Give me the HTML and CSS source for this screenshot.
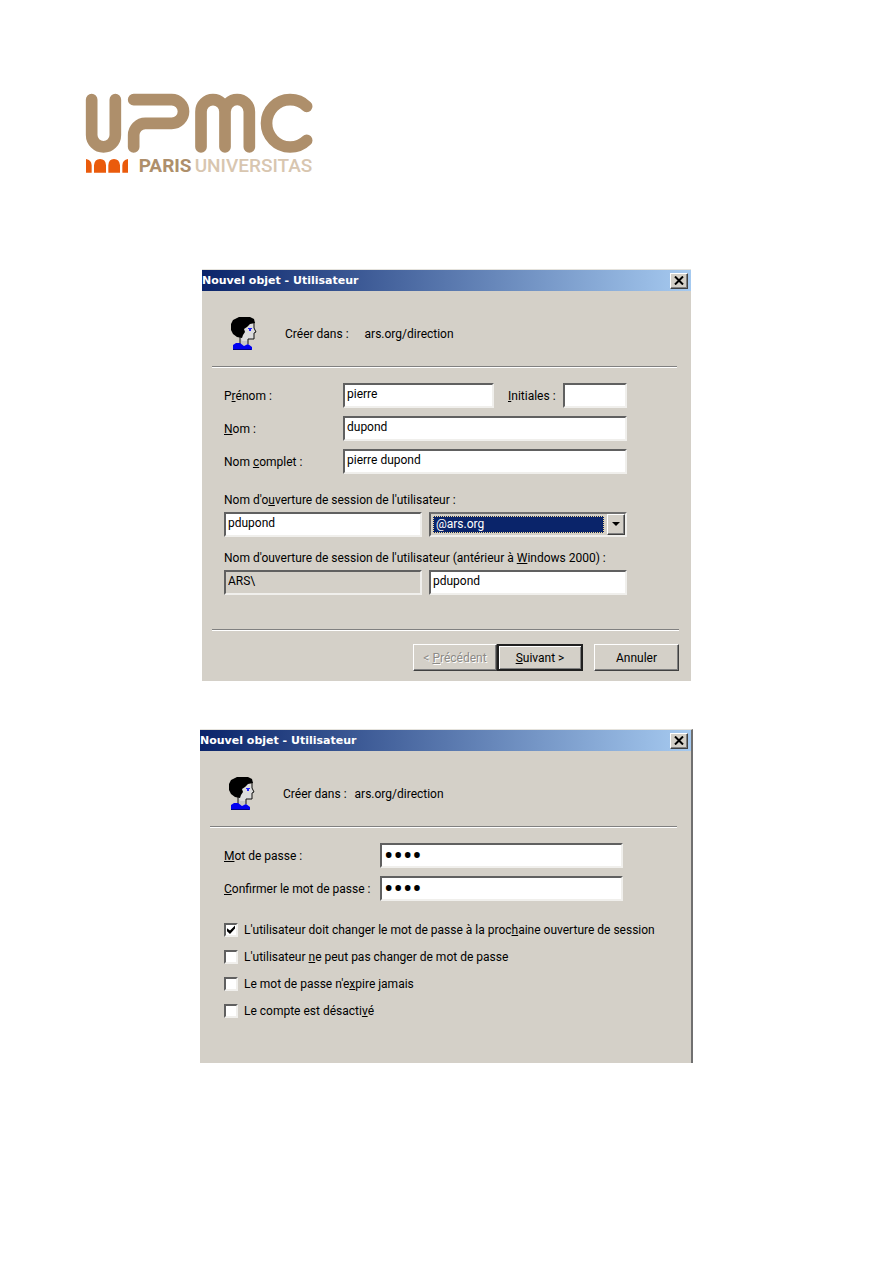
FILE: index.html
```html
<!DOCTYPE html>
<html lang="fr">
<head>
<meta charset="utf-8">
<title>Nouvel objet - Utilisateur</title>
<link rel="stylesheet" href="styles.css">
</head>
<body>
<svg class="defs" aria-hidden="true">
  <symbol id="user" viewBox="0 0 26 33">
    <path d="M9 18h8v10H9z" fill="#c8c8c8"/>
    <path d="M12 7h10l1 5 2 4-2 1v5h-5l-2 2h-5l-2-6z" fill="#dcdcdc"/>
    <path d="M23 5v6l2 4-2 1v6h-6v5M9 20v8" fill="none" stroke="#111"/>
    <path d="M8 0h11l4 2 1 4-5 1-3 3-3 2 1 3-2 3-1 3-5-1-4-3-2-4V7l2-4z" fill="#000"/>
    <path d="M17 11h4v1h-1v2h-2v-2h-1z" fill="#22f"/>
    <path d="M2 28l3-2h4l4 3 4-2 4 3v3H2z" fill="#0000f0"/>
    <path d="M2 32.500h18" stroke="#000080"/>
  </symbol>
</svg>
<main class="page">
  <header class="logo">
    <svg class="logo-art" viewBox="30 30 681 255" role="img" aria-label="UPMC Paris Universitas">
      <g fill="none" stroke="#ae8f6b" stroke-width="35" stroke-linecap="round">
        <path d="M47 47V153A35.500 35.500 0 0 0 118 153V47"/>
        <path d="M173 47H287A35.500 35.500 0 0 1 287 118H208A35 35 0 0 0 173 153V189"/>
        <path d="M375 189V83A36 36 0 0 1 447 83V189M447 83A36.500 36.500 0 0 1 520 83V189"/>
        <path d="M692 67A71 71 0 1 0 692 169"/>
      </g>
      <path fill="#ea5b0c" d="M30 225Q46 227 47 244V266H30ZM54 266V244Q56 225 72 225Q89 225 90 244V266ZM97 266V244Q98 225 114 225Q130 225 132 244V266ZM139 266V244Q140 227 156 225V266Z"/>
      <text class="logo-bold" x="188" y="265">PARIS</text>
      <text class="logo-light" x="356" y="265">UNIVERSITAS</text>
    </svg>
  </header>

  <section class="dialog" aria-labelledby="t1">
    <div class="titlebar"><h2 id="t1">Nouvel objet - Utilisateur</h2>
      <button class="close" aria-label="Fermer"><svg viewBox="0 0 10 9"><path d="M1 0.500L9 8.500M9 0.500L1 8.500" stroke="#000" stroke-width="2"/></svg></button></div>
    <div class="head"><svg class="avatar"><use href="#user"/></svg><span>Créer dans :</span><span class="where">ars.org/direction</span></div>
    <form class="form">
      <div class="row"><label class="lab" for="prenom">P<u>r</u>énom :</label><input class="field" id="prenom" value="pierre"><label class="ini" for="ini"><u>I</u>nitiales :</label><input class="field small" id="ini"></div>
      <div class="row"><label class="lab" for="nom"><u>N</u>om :</label><input class="field" id="nom" value="dupond"></div>
      <div class="row"><label class="lab" for="complet">Nom <u>c</u>omplet :</label><input class="field" id="complet" value="pierre dupond"></div>
      <div class="group first"><label for="login">Nom d'o<u>u</u>verture de session de l'utilisateur :</label>
        <div class="pair"><input class="field" id="login" value="pdupond">
          <div class="combo"><select aria-label="Domaine"><option>@ars.org</option></select><span class="arrow"></span></div></div></div>
      <div class="group"><label for="old">Nom d'ouverture de session de l'utilisateur (antérieur à <u>W</u>indows 2000) :</label>
        <div class="pair"><input class="field off" aria-label="Domaine antérieur" value="ARS\" readonly><input class="field" id="old" value="pdupond"></div></div>
    </form>
    <div class="actions"><button class="btn" disabled>&lt; <u>P</u>récédent</button><button class="btn default"><u>S</u>uivant &gt;</button><button class="btn apart">Annuler</button></div>
  </section>

  <section class="dialog second" aria-labelledby="t2">
    <div class="titlebar"><h2 id="t2">Nouvel objet - Utilisateur</h2>
      <button class="close" aria-label="Fermer"><svg viewBox="0 0 10 9"><path d="M1 0.500L9 8.500M9 0.500L1 8.500" stroke="#000" stroke-width="2"/></svg></button></div>
    <div class="head"><svg class="avatar"><use href="#user"/></svg><span>Créer dans :</span><span class="where">ars.org/direction</span></div>
    <form class="form">
      <div class="row"><label class="lab" for="mdp"><u>M</u>ot de passe :</label><input class="field secret" type="password" id="mdp" value="1234"></div>
      <div class="row"><label class="lab" for="mdp2"><u>C</u>onfirmer le mot de passe :</label><input class="field secret" type="password" id="mdp2" value="1234"></div>
      <div class="checks">
        <label><input type="checkbox" checked><span>L'utilisateur doit changer le mot de passe à la proc<u>h</u>aine ouverture de session</span></label>
        <label><input type="checkbox"><span>L'utilisateur <u>n</u>e peut pas changer de mot de passe</span></label>
        <label><input type="checkbox"><span>Le mot de passe n'e<u>x</u>pire jamais</span></label>
        <label><input type="checkbox"><span>Le compte est désacti<u>v</u>é</span></label>
      </div>
    </form>
  </section>
</main>
</body>
</html>
```
FILE: styles.css
```css
* { box-sizing: border-box; }
body { margin: 0; background: #fff; color: #000; font: 12px/16px Roboto, "Liberation Sans", sans-serif; }
input, select, button { font: inherit; color: inherit; margin: 0; border-radius: 0; }
.defs { position: absolute; width: 0; height: 0; }
.page { padding: 94px 24px 200px; }
.logo { padding-left: 62px; margin-bottom: 90px; }
.logo-art { display: block; width: 227px; height: 85px; overflow: visible; }
.logo-bold, .logo-light { font-family: Roboto, sans-serif; font-size: 57px; }
.logo-bold { font-weight: 700; fill: #ae8f6b; }
.logo-light { font-weight: 500; fill: #d8c6b0; }

.dialog { max-width: 489px; margin: 0 auto 48px; background: #d4d0c8; border-top: 1px solid #e4e2dc; padding-bottom: 10px; }
.titlebar { display: flex; align-items: center; justify-content: space-between; height: 21px; padding-right: 3px; background: linear-gradient(to right, #0a246a, #a6caf0); }
.titlebar h2 { margin: 0; color: #fff; font: bold 11px/20px "DejaVu Sans", sans-serif; }
.close { display: grid; place-items: center; width: 18px; height: 16px; padding: 0; background: #d4d0c8; border: 1px solid; border-color: #fff #404040 #404040 #fff; box-shadow: inset -1px -1px #808080; }
.close svg { width: 10px; height: 9px; }
.head { display: flex; align-items: center; height: 76px; margin: 0 14px 0 10px; padding-left: 19px; padding-top: 10px; border-bottom: 1px solid #808080; box-shadow: 0 1px #fff; }
.avatar { width: 26px; height: 33px; margin-right: 28px; }
.where { margin-left: 16px; }
.form { padding: 16px 64px 0 22px; }
.row { display: flex; align-items: center; margin-bottom: 8px; }
.lab { flex: none; width: 119px; white-space: nowrap; }
.field { flex: 1; min-width: 0; width: 100%; height: 25px; padding: 0 2px 3px; background: #fff; border: 2px solid; border-color: #606060 #f0efec #f0efec #606060; outline: none; }
.ini { flex: none; width: 69px; padding-left: 14px; }
.small { flex: none; width: 64px; }
.secret { font-size: 28px; padding: 0 2px; }
.group { display: flex; flex-direction: column; gap: 4px; margin-top: 13px; }
.group.first { margin-top: 18px; }
.pair { display: grid; grid-template-columns: 1fr 1fr; gap: 7px; }
.off { background: #d4d0c8; }
.combo { position: relative; height: 25px; padding: 2px 21px 2px 2px; background: #d4d0c8; border: 2px solid; border-color: #707070 #f0efec #f0efec #606060; }
.combo select { display: block; appearance: none; width: 100%; height: 17px; padding: 0 2px; color: #fff; background: #0a246a; border: 1px dotted #f5db95; outline: none; line-height: 15px; }
.arrow { position: absolute; top: 0; right: 0; width: 18px; height: 21px; background: #d4d0c8; border: 1px solid; border-color: #fff #404040 #404040 #fff; box-shadow: inset -1px -1px #808080; pointer-events: none; }
.arrow::after { content: ""; display: block; margin: 7px auto 0; width: 8px; height: 4px; background: #000; clip-path: polygon(0 0, 100% 0, 50% 100%); }
.actions { display: flex; justify-content: flex-end; margin: 34px 12px 0 10px; padding-top: 14px; border-top: 1px solid #808080; box-shadow: inset 0 1px #fff; }
.btn { width: 84px; height: 27px; padding: 0; background: #d4d0c8; border: 1px solid; border-color: #fff #404040 #404040 #fff; box-shadow: inset -1px -1px #808080; }
.btn:disabled { color: #8c8a86; text-shadow: 1px 1px #fff; }
.default { width: 86px; border: 2px solid #202020; box-shadow: inset 1px 1px #fff, inset -1px -1px #808080; }
.apart { width: 85px; margin-left: 11px; }

.second { max-width: 493px; margin-bottom: 0; padding-bottom: 44px; border-right: 2px solid #707070; }
.second .where { margin-left: 8px; }
.second .form { padding: 16px 68px 0 24px; }
.second .lab { width: 156px; }
.checks { display: flex; flex-direction: column; gap: 11px; padding-top: 13px; white-space: nowrap; }
.checks label { display: flex; align-items: center; gap: 6px; }
.checks input { appearance: none; width: 14px; height: 14px; background: #fff; border: 2px solid; border-color: #606060 #f0efec #f0efec #606060; }
.checks input:checked::before { content: ""; display: block; width: 10px; height: 9px; background: #000; clip-path: polygon(10% 35%, 40% 62%, 90% 5%, 90% 40%, 40% 100%, 10% 70%); }
```
